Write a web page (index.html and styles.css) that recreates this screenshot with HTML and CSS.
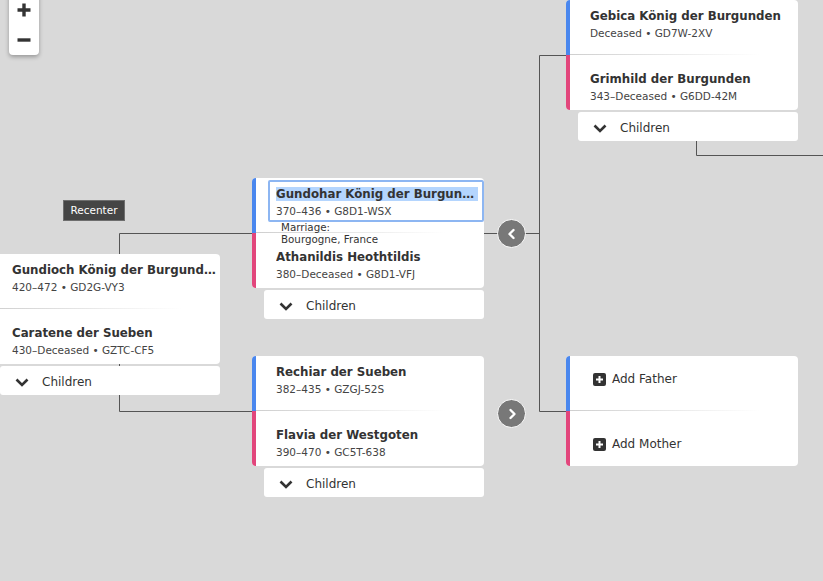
FILE: index.html
```html
<!DOCTYPE html>
<html lang="de">
<head>
<meta charset="utf-8">
<title>Family Tree</title>
<link rel="stylesheet" href="styles.css">
</head>
<body>
<div class="canvas">
  <svg class="links" width="823" height="581" viewBox="0 0 823 581">
    <path d="M119.5 233.5H252M119.5 233.5V411.5H252M484 233.5H539.5M539.5 55.5V411.5M539.5 55.5H566M539.5 411.5H566M696.5 141V155.5H823" />
  </svg>

  <div class="zoom">
    <button class="zbtn" aria-label="Zoom in"><svg width="16" height="16" viewBox="0 0 16 16"><path d="M8 1.5V14.5M1.5 8H14.5"/></svg></button>
    <button class="zbtn" aria-label="Zoom out"><svg width="16" height="16" viewBox="0 0 16 16"><path d="M1.5 8H14.5"/></svg></button>
  </div>

  <div class="tooltip">Recenter</div>

  <!-- Left couple -->
  <div class="couple n-gundioch">
    <div class="card">
      <div class="person male">
        <div class="name">Gundioch König der Burgunden</div>
        <div class="meta">420–472 • GD2G-VY3</div>
      </div>
      <div class="person female">
        <div class="name">Caratene der Sueben</div>
        <div class="meta">430–Deceased • GZTC-CF5</div>
      </div>
    </div>
    <div class="children"><svg width="14" height="9" viewBox="0 0 14 9"><path d="M1.5 1.5L7 7L12.5 1.5"/></svg><span>Children</span></div>
  </div>

  <!-- Focus couple -->
  <div class="couple n-gundohar">
    <div class="card">
      <div class="person male focused">
        <div class="info">
          <div class="name"><span class="sel">Gundohar König der Burgunden</span></div>
          <div class="meta">370–436 • G8D1-WSX</div>
        </div>
      </div>
      <div class="person female">
        <div class="name">Athanildis Heothtildis</div>
        <div class="meta">380–Deceased • G8D1-VFJ</div>
      </div>
      <div class="marriage">Marriage:<br>Bourgogne, France</div>
    </div>
    <div class="children"><svg width="14" height="9" viewBox="0 0 14 9"><path d="M1.5 1.5L7 7L12.5 1.5"/></svg><span>Children</span></div>
  </div>

  <!-- Second couple -->
  <div class="couple n-rechiar">
    <div class="card">
      <div class="person male">
        <div class="name">Rechiar der Sueben</div>
        <div class="meta">382–435 • GZGJ-52S</div>
      </div>
      <div class="person female">
        <div class="name">Flavia der Westgoten</div>
        <div class="meta">390–470 • GC5T-638</div>
      </div>
    </div>
    <div class="children"><svg width="14" height="9" viewBox="0 0 14 9"><path d="M1.5 1.5L7 7L12.5 1.5"/></svg><span>Children</span></div>
  </div>

  <!-- Parents couple -->
  <div class="couple n-gebica">
    <div class="card">
      <div class="person male">
        <div class="name">Gebica König der Burgunden</div>
        <div class="meta">Deceased • GD7W-2XV</div>
      </div>
      <div class="person female">
        <div class="name">Grimhild der Burgunden</div>
        <div class="meta">343–Deceased • G6DD-42M</div>
      </div>
    </div>
    <div class="children"><svg width="14" height="9" viewBox="0 0 14 9"><path d="M1.5 1.5L7 7L12.5 1.5"/></svg><span>Children</span></div>
  </div>

  <!-- Add parents -->
  <div class="couple n-add">
    <div class="card">
      <div class="person male add">
        <div class="addrow"><svg class="plus" width="13" height="13" viewBox="0 0 13 13"><rect width="13" height="13" rx="2"/><path d="M6.5 3V10M3 6.5H10"/></svg><span>Add Father</span></div>
      </div>
      <div class="person female add">
        <div class="addrow"><svg class="plus" width="13" height="13" viewBox="0 0 13 13"><rect width="13" height="13" rx="2"/><path d="M6.5 3V10M3 6.5H10"/></svg><span>Add Mother</span></div>
      </div>
    </div>
  </div>

  <button class="expand e-left" aria-label="Collapse"><svg width="12" height="12" viewBox="0 0 12 12"><path d="M7.5 2L3.5 6L7.5 10"/></svg></button>
  <button class="expand e-right" aria-label="Expand"><svg width="12" height="12" viewBox="0 0 12 12"><path d="M4.5 2L8.5 6L4.5 10"/></svg></button>
</div>
</body>
</html>
```

FILE: styles.css
```css
* { box-sizing: border-box; }

html, body {
  margin: 0;
  padding: 0;
  background: #d9d9d9;
}

body {
  font-family: "DejaVu Sans", Verdana, sans-serif;
  color: #333;
}

.canvas {
  position: relative;
  width: 823px;
  height: 581px;
  overflow: hidden;
  background: #d9d9d9;
}

.links {
  position: absolute;
  left: 0;
  top: 0;
}

.links path {
  fill: none;
  stroke: #555;
  stroke-width: 1;
}

/* zoom control */
.zoom {
  position: absolute;
  left: 9px;
  top: -6px;
  width: 30px;
  height: 61px;
  background: #fff;
  border-radius: 0 0 4px 4px;
  box-shadow: 0 2px 4px rgba(0, 0, 0, 0.3);
  display: flex;
  flex-direction: column;
  padding-top: 1px;
}

.zbtn {
  border: 0;
  background: transparent;
  padding: 0;
  height: 30px;
  display: flex;
  align-items: center;
  justify-content: center;
  cursor: pointer;
}

.zbtn path {
  stroke: #333;
  stroke-width: 3.4;
  fill: none;
}

/* tooltip */
.tooltip {
  position: absolute;
  left: 63px;
  top: 200px;
  width: 62px;
  height: 21px;
  background: #454545;
  border: 1px solid #6e6e6e;
  color: #fff;
  font-size: 10.5px;
  line-height: 19px;
  text-align: center;
}

/* couple nodes */
.couple {
  position: absolute;
  width: 232px;
  display: flex;
  flex-direction: column;
}

.n-gundioch { left: -12px; top: 254px; }
.n-gundohar { left: 252px; top: 178px; }
.n-rechiar  { left: 252px; top: 356px; }
.n-gebica   { left: 566px; top: 0; }
.n-add      { left: 566px; top: 356px; }

.card {
  position: relative;
  height: 110px;
  background: #fff;
  border-radius: 4px;
  overflow: hidden;
  display: flex;
  flex-direction: column;
}

.person {
  position: relative;
  height: 55px;
  padding: 9px 2px 0 20px;
  border-left: 4px solid transparent;
}

.person.male { border-left-color: #4a87ee; }
.person.female { border-left-color: #e2467c; padding-top: 17px; }

.person:first-child::after {
  content: "";
  position: absolute;
  left: 0;
  bottom: 0;
  width: 190px;
  height: 1px;
  background: linear-gradient(to right, #cfcfcf, rgba(255, 255, 255, 0));
}

.name {
  font-size: 11.8px;
  font-weight: bold;
  line-height: 15px;
  color: #333;
  white-space: nowrap;
  overflow: hidden;
  text-overflow: ellipsis;
}

.meta {
  margin-top: 2px;
  font-size: 10.5px;
  line-height: 14px;
  color: #444;
  white-space: nowrap;
}

.person.focused {
  padding: 2px 0 0 12px;
}

.info {
  border: 2px solid #8db6f2;
  border-radius: 2px;
  padding: 5px 4px 2px 6px;
}

.sel {
  background: #b4d5fe;
}

.marriage {
  position: absolute;
  left: 29px;
  top: 43px;
  font-size: 10.3px;
  line-height: 12px;
  color: #333;
}

.children {
  margin: 2px 0 0 12px;
  height: 29px;
  background: #fff;
  border-radius: 3px;
  display: flex;
  align-items: center;
  padding: 3px 0 0 15px;
  gap: 13px;
  font-size: 12px;
  color: #333;
}

.children path {
  fill: none;
  stroke: #333;
  stroke-width: 2.6;
}

.person.add.male { padding-top: 16px; }
.person.add.female { padding-top: 26px; }

.addrow {
  display: flex;
  align-items: center;
  gap: 6px;
  font-size: 12px;
  line-height: 14px;
  color: #333;
  padding-left: 3px;
}

.plus rect { fill: #333; }
.plus path { stroke: #fff; stroke-width: 2; fill: none; }

/* expand buttons */
.expand {
  position: absolute;
  left: 497px;
  width: 29px;
  height: 29px;
  border-radius: 50%;
  background: #787878;
  border: 1.5px solid #fff;
  padding: 0;
  display: flex;
  align-items: center;
  justify-content: center;
  cursor: pointer;
}

.e-left { top: 219px; }
.e-right { top: 399px; }

.expand path {
  fill: none;
  stroke: #fff;
  stroke-width: 2.4;
  stroke-linecap: round;
  stroke-linejoin: round;
}
```
